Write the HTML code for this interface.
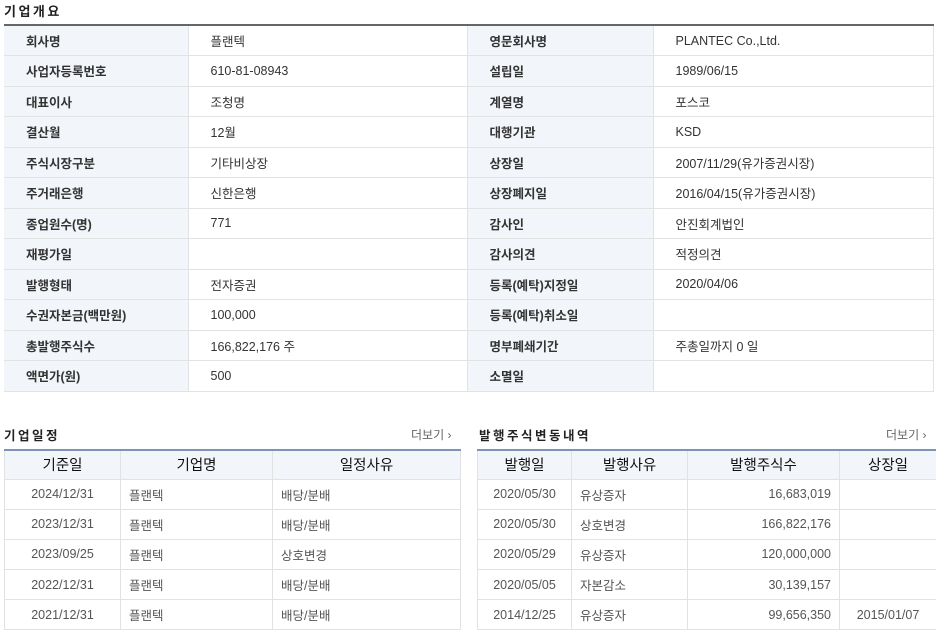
<!DOCTYPE html>
<html><head><meta charset="utf-8"><style>
*{margin:0;padding:0;box-sizing:border-box}
body{width:936px;height:635px;background:#fff;font-family:"Liberation Sans","Noto Sans CJK KR",sans-serif;color:#333;position:relative;overflow:hidden}
.t{position:absolute;font-size:13px;font-weight:bold;color:#222;letter-spacing:2.5px}
table{border-collapse:collapse;position:absolute;table-layout:fixed}
.top{left:4px;top:24px;width:929px;border-top:2px solid #666}
.top td{height:30.5px;border-bottom:1px solid #e2e2e2;font-size:12.5px;padding-left:22px;color:#333}
.top td.l{background:#f2f6fa;font-weight:bold;color:#333;border-right:1px solid #e2e2e2}
.top td.v{border-right:1px solid #e2e2e2}
.bt{top:449px;border-top:2px solid #7d93b8;border-left:1px solid #e2e2e2}
.bt th{height:29px;background:#f2f6fa;font-size:14.5px;font-weight:normal;color:#111;border-right:1px solid #e2e2e2;border-bottom:1px solid #e2e2e2}
.bt td{height:30.2px;font-size:12.5px;color:#555;border-right:1px solid #e2e2e2;border-bottom:1px solid #e2e2e2;padding-left:8px}
.c{text-align:center;padding-left:0!important}
.r{text-align:right;padding-right:8px}
.more{position:absolute;font-size:12px;color:#666}
</style></head><body>
<div class="t" style="left:4px;top:1px">기업개요</div>
<table class="top">
<col style="width:184px"><col style="width:279px"><col style="width:186px"><col style="width:280px">
<tr><td class="l">회사명</td><td class="v">플랜텍</td><td class="l">영문회사명</td><td class="v">PLANTEC Co.,Ltd.</td></tr>
<tr><td class="l">사업자등록번호</td><td class="v">610-81-08943</td><td class="l">설립일</td><td class="v">1989/06/15</td></tr>
<tr><td class="l">대표이사</td><td class="v">조청명</td><td class="l">계열명</td><td class="v">포스코</td></tr>
<tr><td class="l">결산월</td><td class="v">12월</td><td class="l">대행기관</td><td class="v">KSD</td></tr>
<tr><td class="l">주식시장구분</td><td class="v">기타비상장</td><td class="l">상장일</td><td class="v">2007/11/29(유가증권시장)</td></tr>
<tr><td class="l">주거래은행</td><td class="v">신한은행</td><td class="l">상장폐지일</td><td class="v">2016/04/15(유가증권시장)</td></tr>
<tr><td class="l">종업원수(명)</td><td class="v">771</td><td class="l">감사인</td><td class="v">안진회계법인</td></tr>
<tr><td class="l">재평가일</td><td class="v"></td><td class="l">감사의견</td><td class="v">적정의견</td></tr>
<tr><td class="l">발행형태</td><td class="v">전자증권</td><td class="l">등록(예탁)지정일</td><td class="v">2020/04/06</td></tr>
<tr><td class="l">수권자본금(백만원)</td><td class="v">100,000</td><td class="l">등록(예탁)취소일</td><td class="v"></td></tr>
<tr><td class="l">총발행주식수</td><td class="v">166,822,176 주</td><td class="l">명부폐쇄기간</td><td class="v">주총일까지 0 일</td></tr>
<tr><td class="l">액면가(원)</td><td class="v">500</td><td class="l">소멸일</td><td class="v"></td></tr>
</table>

<div class="t" style="left:4px;top:425px;font-size:12.5px">기업일정</div>
<div class="more" style="left:411px;top:426px">더보기 ›</div>
<table class="bt" style="left:4px;width:456px">
<col style="width:116px"><col style="width:152px"><col style="width:188px">
<tr><th>기준일</th><th>기업명</th><th>일정사유</th></tr>
<tr><td class="c">2024/12/31</td><td>플랜텍</td><td>배당/분배</td></tr>
<tr><td class="c">2023/12/31</td><td>플랜텍</td><td>배당/분배</td></tr>
<tr><td class="c">2023/09/25</td><td>플랜텍</td><td>상호변경</td></tr>
<tr><td class="c">2022/12/31</td><td>플랜텍</td><td>배당/분배</td></tr>
<tr><td class="c">2021/12/31</td><td>플랜텍</td><td>배당/분배</td></tr>
</table>

<div class="t" style="left:479px;top:425px;font-size:12.5px">발행주식변동내역</div>
<div class="more" style="left:886px;top:426px">더보기 ›</div>
<table class="bt" style="left:477px;width:459px">
<col style="width:94px"><col style="width:116px"><col style="width:152px"><col style="width:97px">
<tr><th>발행일</th><th>발행사유</th><th>발행주식수</th><th>상장일</th></tr>
<tr><td class="c">2020/05/30</td><td>유상증자</td><td class="r">16,683,019</td><td></td></tr>
<tr><td class="c">2020/05/30</td><td>상호변경</td><td class="r">166,822,176</td><td></td></tr>
<tr><td class="c">2020/05/29</td><td>유상증자</td><td class="r">120,000,000</td><td></td></tr>
<tr><td class="c">2020/05/05</td><td>자본감소</td><td class="r">30,139,157</td><td></td></tr>
<tr><td class="c">2014/12/25</td><td>유상증자</td><td class="r">99,656,350</td><td class="c">2015/01/07</td></tr>
</table>
</body></html>
